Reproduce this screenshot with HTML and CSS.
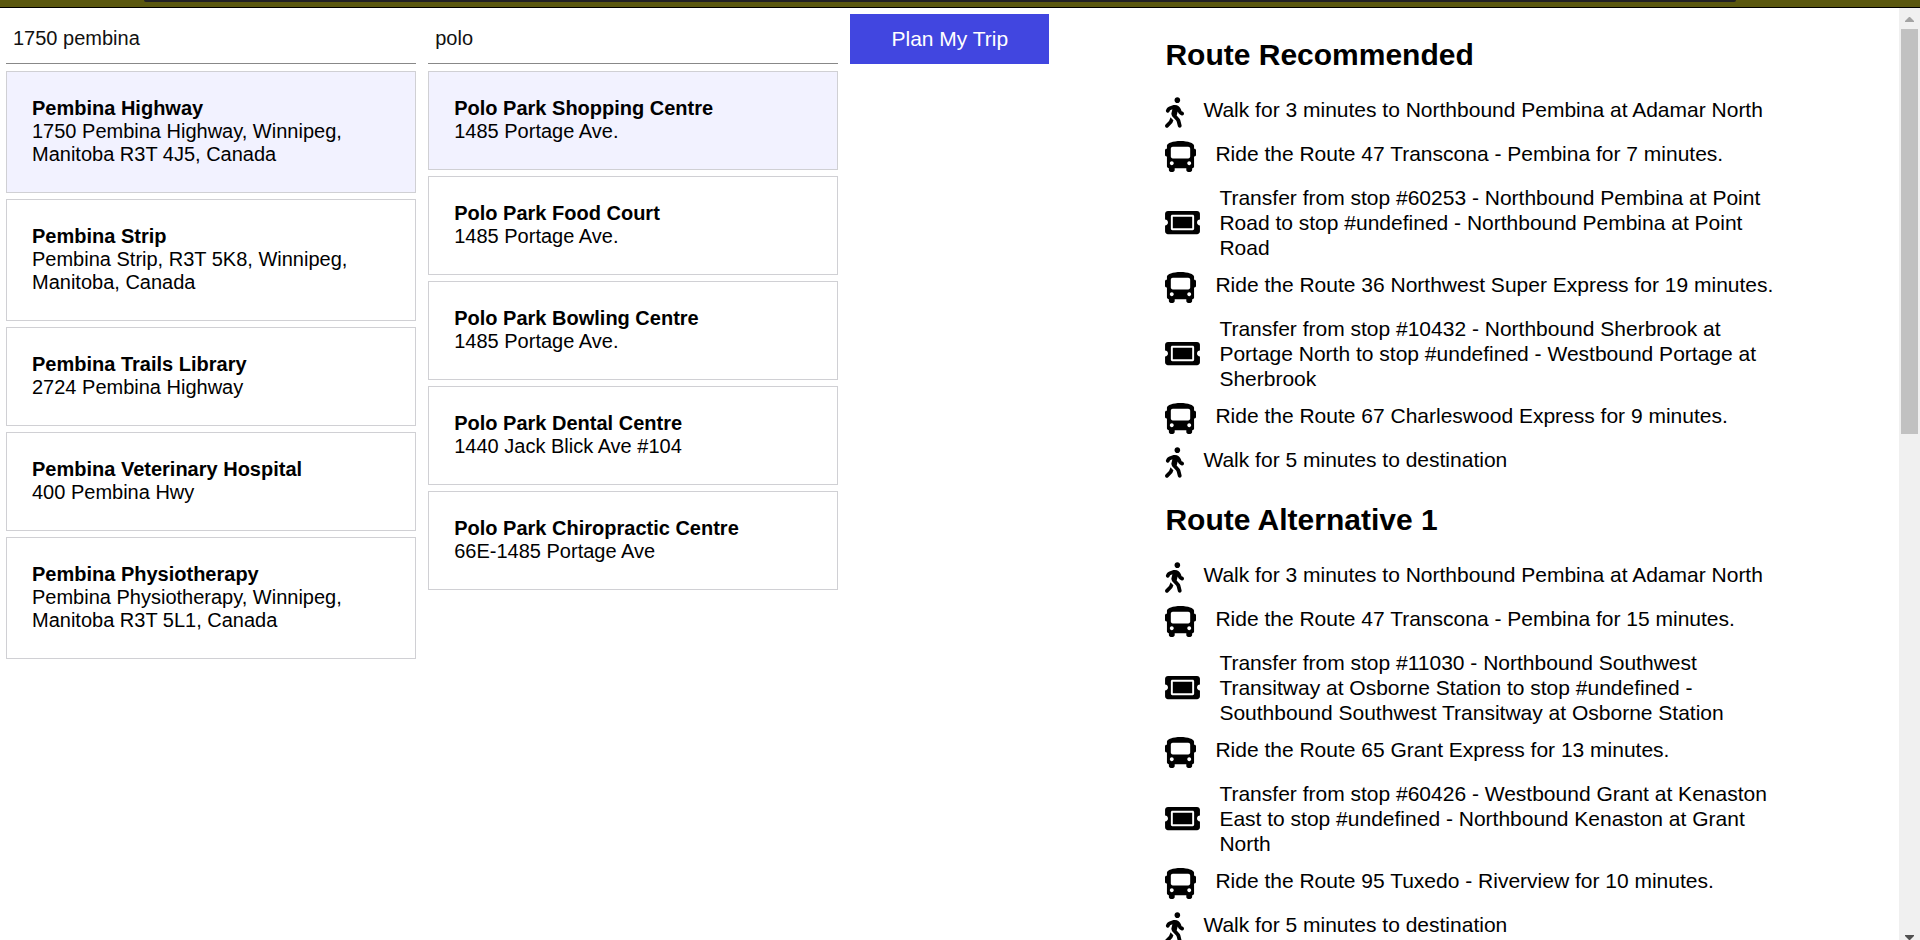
FILE: index.html
```html
<!DOCTYPE html>
<html lang="en">
<head>
<meta charset="utf-8">
<title>Trip Planner</title>
<link rel="stylesheet" href="styles.css">
</head>
<body>
<svg class="sprite" aria-hidden="true">
  <symbol id="walk" viewBox="0 0 320 512"><path d="M208 96c26.5 0 48-21.5 48-48S234.5 0 208 0s-48 21.5-48 48 21.5 48 48 48zm94.5 149.1l-23.3-11.8-9.7-29.4c-14.7-44.6-55.7-75.8-102.2-75.9-36-.1-55.9 10.1-93.3 25.2-21.6 8.7-39.3 25.2-49.7 46.2L17.6 213c-7.8 15.8-1.5 35 14.2 42.9 15.6 7.9 34.6 1.5 42.5-14.3L81 228c3.5-7 9.3-12.5 16.5-15.4l26.8-10.8-15.2 60.7c-5.2 20.8.4 42.9 14.9 58.8l59.9 65.4c7.2 7.9 12.3 17.4 14.9 27.7l18.3 73.3c4.3 17.1 21.7 27.6 38.8 23.3 17.1-4.3 27.6-21.7 23.3-38.8l-22.2-89c-2.6-10.3-7.7-19.9-14.9-27.7l-45.5-49.7 17.2-68.7 5.5 16.5c5.3 16.1 16.7 29.4 31.7 37l23.3 11.8c15.6 7.9 34.6 1.5 42.5-14.3 7.7-15.7 1.4-35.1-14.3-43zM73.6 385.8c-3.2 8.1-8 15.4-14.2 21.5l-50 50.1c-12.5 12.5-12.5 32.8 0 45.3s32.7 12.5 45.2 0l59.4-59.4c6.1-6.1 10.9-13.4 14.2-21.5l13.5-33.8c-55.3-60.3-38.7-41.8-47.4-53.7l-20.7 51.5z"/></symbol>
  <symbol id="bus" viewBox="0 0 512 512"><path d="M488 128h-8V80c0-44.8-99.2-80-224-80S32 35.2 32 80v48h-8c-13.25 0-24 10.74-24 24v80c0 13.25 10.75 24 24 24h8v160c0 17.67 14.33 32 32 32v32c0 17.67 14.33 32 32 32h32c17.67 0 32-14.33 32-32v-32h192v32c0 17.67 14.33 32 32 32h32c17.67 0 32-14.33 32-32v-32h6.4c16 0 25.6-12.8 25.6-25.6V256h8c13.25 0 24-10.75 24-24v-80c0-13.26-10.75-24-24-24zM112 400c-17.67 0-32-14.33-32-32s14.33-32 32-32 32 14.33 32 32-14.33 32-32 32zm16-112c-17.67 0-32-14.33-32-32V128c0-17.67 14.33-32 32-32h256c17.67 0 32 14.33 32 32v128c0 17.67-14.33 32-32 32H128zm272 112c-17.67 0-32-14.33-32-32s14.33-32 32-32 32 14.33 32 32-14.33 32-32 32z"/></symbol>
  <symbol id="ticket" viewBox="0 0 576 512"><path d="M128 160h320v192H128V160zm400 96c0 26.51 21.49 48 48 48v96c0 26.51-21.49 48-48 48H48c-26.51 0-48-21.49-48-48v-96c26.51 0 48-21.49 48-48s-21.49-48-48-48v-96c0-26.51 21.49-48 48-48h480c26.51 0 48 21.49 48 48v96c-26.51 0-48 21.49-48 48zm-48-104c0-13.255-10.745-24-24-24H120c-13.255 0-24 10.745-24 24v208c0 13.255 10.745 24 24 24h336c13.255 0 24-10.745 24-24V152z"/></symbol>
</svg>

<div class="topbar"><div class="topbar-tab"></div></div>

<div class="page">
  <main class="content">
    <form class="planner">
      <section class="place">
        <input class="search" type="text" aria-label="Starting location" value="1750 pembina">
        <ul class="results">
          <li><button type="button" class="card selected"><strong>Pembina Highway</strong><span>1750 Pembina Highway, Winnipeg, Manitoba R3T 4J5, Canada</span></button></li>
          <li><button type="button" class="card"><strong>Pembina Strip</strong><span>Pembina Strip, R3T 5K8, Winnipeg, Manitoba, Canada</span></button></li>
          <li><button type="button" class="card"><strong>Pembina Trails Library</strong><span>2724 Pembina Highway</span></button></li>
          <li><button type="button" class="card"><strong>Pembina Veterinary Hospital</strong><span>400 Pembina Hwy</span></button></li>
          <li><button type="button" class="card"><strong>Pembina Physiotherapy</strong><span>Pembina Physiotherapy, Winnipeg, Manitoba R3T 5L1, Canada</span></button></li>
        </ul>
      </section>
      <section class="place">
        <input class="search" type="text" aria-label="Destination" value="polo">
        <ul class="results">
          <li><button type="button" class="card selected"><strong>Polo Park Shopping Centre</strong><span>1485 Portage Ave.</span></button></li>
          <li><button type="button" class="card"><strong>Polo Park Food Court</strong><span>1485 Portage Ave.</span></button></li>
          <li><button type="button" class="card"><strong>Polo Park Bowling Centre</strong><span>1485 Portage Ave.</span></button></li>
          <li><button type="button" class="card"><strong>Polo Park Dental Centre</strong><span>1440 Jack Blick Ave #104</span></button></li>
          <li><button type="button" class="card"><strong>Polo Park Chiropractic Centre</strong><span>66E-1485 Portage Ave</span></button></li>
        </ul>
      </section>
      <button type="submit" class="plan">Plan My Trip</button>
    </form>

    <section class="routes">
      <article class="route">
        <h2>Route Recommended</h2>
        <ul class="steps">
          <li class="step"><svg class="icon walk"><use href="#walk"/></svg><span>Walk for 3 minutes to Northbound Pembina at Adamar North</span></li>
          <li class="step"><svg class="icon bus"><use href="#bus"/></svg><span>Ride the Route 47 Transcona - Pembina for 7 minutes.</span></li>
          <li class="step transfer"><svg class="icon ticket"><use href="#ticket"/></svg><span>Transfer from stop #60253 - Northbound Pembina at Point Road to stop #undefined - Northbound Pembina at Point Road</span></li>
          <li class="step"><svg class="icon bus"><use href="#bus"/></svg><span>Ride the Route 36 Northwest Super Express for 19 minutes.</span></li>
          <li class="step transfer"><svg class="icon ticket"><use href="#ticket"/></svg><span>Transfer from stop #10432 - Northbound Sherbrook at Portage North to stop #undefined - Westbound Portage at Sherbrook</span></li>
          <li class="step"><svg class="icon bus"><use href="#bus"/></svg><span>Ride the Route 67 Charleswood Express for 9 minutes.</span></li>
          <li class="step"><svg class="icon walk"><use href="#walk"/></svg><span>Walk for 5 minutes to destination</span></li>
        </ul>
      </article>
      <article class="route">
        <h2>Route Alternative 1</h2>
        <ul class="steps">
          <li class="step"><svg class="icon walk"><use href="#walk"/></svg><span>Walk for 3 minutes to Northbound Pembina at Adamar North</span></li>
          <li class="step"><svg class="icon bus"><use href="#bus"/></svg><span>Ride the Route 47 Transcona - Pembina for 15 minutes.</span></li>
          <li class="step transfer"><svg class="icon ticket"><use href="#ticket"/></svg><span>Transfer from stop #11030 - Northbound Southwest Transitway at Osborne Station to stop #undefined - Southbound Southwest Transitway at Osborne Station</span></li>
          <li class="step"><svg class="icon bus"><use href="#bus"/></svg><span>Ride the Route 65 Grant Express for 13 minutes.</span></li>
          <li class="step transfer"><svg class="icon ticket"><use href="#ticket"/></svg><span>Transfer from stop #60426 - Westbound Grant at Kenaston East to stop #undefined - Northbound Kenaston at Grant North</span></li>
          <li class="step"><svg class="icon bus"><use href="#bus"/></svg><span>Ride the Route 95 Tuxedo - Riverview for 10 minutes.</span></li>
          <li class="step"><svg class="icon walk"><use href="#walk"/></svg><span>Walk for 5 minutes to destination</span></li>
        </ul>
      </article>
    </section>
  </main>
  <div class="scrollbar" aria-hidden="true">
    <svg class="arrow up" viewBox="0 0 9 5"><path d="M4 0h1l4 4v1H0V4z"/></svg>
    <div class="track"><div class="thumb"></div></div>
    <svg class="arrow down" viewBox="0 0 9 5"><path d="M0 0h9v1L5 5H4L0 1z"/></svg>
  </div>
</div>
</body>
</html>
```
FILE: styles.css
```css
* {
  box-sizing: border-box;
}

body {
  margin: 0;
  height: 100vh;
  display: flex;
  flex-direction: column;
  overflow: hidden;
  background: #fff;
  color: #000;
  font: 20px/23px "Liberation Sans", Arial, sans-serif;
}

ul {
  list-style: none;
  margin: 0;
  padding: 0;
}

.sprite {
  display: none;
}

/* Window edge above the page */
.topbar {
  flex: none;
  height: 8px;
  padding: 0 184px 0 144px;
  background: #5a570f;
  border-bottom: 1px solid #000;
}

.topbar-tab {
  height: 2px;
  background: #212124;
  border-radius: 0 0 4px 4px;
}

.page {
  flex: 1;
  min-height: 0;
  display: flex;
}

.content {
  flex: 1;
  display: flex;
  align-items: flex-start;
  overflow: hidden;
}

/* Search columns */
.planner {
  flex: 0 0 60%;
  display: grid;
  grid-template-columns: 29fr 29fr 20fr;
  align-items: start;
  gap: 12px;
  padding: 6px;
}

.search {
  display: block;
  width: 100%;
  height: 50px;
  padding: 0 7px;
  border: 0;
  border-bottom: 1px solid #888;
  background: none;
  color: #111;
  font: inherit;
}

.results {
  display: flex;
  flex-direction: column;
  gap: 6px;
  padding-top: 7px;
}

.card {
  display: flex;
  flex-direction: column;
  width: 100%;
  padding: 25px 25px 26px;
  border: 1px solid #d0d0d4;
  background: #fff;
  color: #000;
  font: inherit;
  text-align: left;
}

.card.selected {
  background: #f2f2ff;
}

.plan {
  justify-self: start;
  height: 50px;
  padding: 0 41px 2px;
  border: 0;
  background: #4146e0;
  color: #fff;
  font: inherit;
  font-size: 21px;
}

/* Route directions */
.routes {
  flex: 1;
  display: flex;
  flex-direction: column;
  gap: 24px;
  padding: 30px 109px 0 26px;
  font-size: 21px;
  line-height: 25px;
}

.route h2 {
  margin: 0 0 25px;
  font-size: 30px;
  line-height: 34px;
}

.steps {
  display: flex;
  flex-direction: column;
  gap: 12px;
}

.step {
  display: flex;
  gap: 19px;
  min-height: 32px;
}

.step.transfer {
  align-items: center;
}

.icon {
  flex: none;
  height: 31px;
}

.icon.walk {
  width: 19px;
}

.icon.bus {
  width: 31px;
}

.icon.ticket {
  width: 35px;
}

/* Page scrollbar */
.scrollbar {
  flex: none;
  display: flex;
  flex-direction: column;
  align-items: center;
  width: 21px;
  padding-top: 9px;
  background: #f0f0f0;
}

.arrow {
  width: 9px;
  height: 5px;
  fill: #a3a3a3;
}

.arrow.down {
  fill: #505050;
}

.track {
  flex: 1;
  width: 17px;
  padding: 7px 0;
}

.thumb {
  height: 45%;
  background: #c1c1c1;
}
```
